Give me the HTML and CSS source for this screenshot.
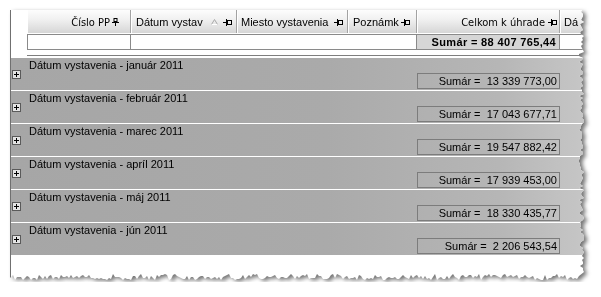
FILE: index.html
```html
<!DOCTYPE html>
<html lang="sk">
<head>
<meta charset="utf-8">
<title>Grid</title>
<link rel="stylesheet" href="styles.css">
</head>
<body>
<div class="paper">
  <div class="sheet" id="sheet">
    <div class="hdr">
      <div class="hc c1 right"><span class="narrow">Číslo PP</span><svg class="pinv" width="7" height="8" viewBox="0 0 7 8"><rect x="2" y="0.5" width="3" height="3" fill="none" stroke="#000"/><path d="M0 4.5H7M3.5 4.5V8" stroke="#000"/></svg></div>
      <div class="hc c2"><span class="t">Dátum vystav</span><svg class="sort" width="7" height="6" viewBox="0 0 7 6"><path d="M3.5 0.5L6.5 5.5H0.5Z" fill="none" stroke="#a8a8a8"/><path d="M0.5 5.5H6.5" stroke="#fff"/></svg><svg class="pin" width="9" height="7" viewBox="0 0 9 7"><path d="M0 3.5H4M3.5 0V7" stroke="#000"/><rect x="4.5" y="1.5" width="4" height="4" fill="none" stroke="#000"/></svg></div>
      <div class="hc c3"><span class="t">Miesto vystavenia</span><svg class="pin" width="9" height="7" viewBox="0 0 9 7"><path d="M0 3.5H4M3.5 0V7" stroke="#000"/><rect x="4.5" y="1.5" width="4" height="4" fill="none" stroke="#000"/></svg></div>
      <div class="hc c4"><span class="t">Poznámk</span><svg class="pin" width="9" height="7" viewBox="0 0 9 7"><path d="M0 3.5H4M3.5 0V7" stroke="#000"/><rect x="4.5" y="1.5" width="4" height="4" fill="none" stroke="#000"/></svg></div>
      <div class="hc c5 right"><span class="narrow">Celkom k úhrade</span><svg class="pin" width="9" height="7" viewBox="0 0 9 7"><path d="M0 3.5H4M3.5 0V7" stroke="#000"/><rect x="4.5" y="1.5" width="4" height="4" fill="none" stroke="#000"/></svg></div>
      <div class="hc c6"><span class="t">Dá</span></div>
    </div>
    <div class="filter">
      <div class="fc f1"></div>
      <div class="fc f2"></div>
      <div class="fc f3">Sumár = 88 407 765,44</div>
      <div class="fc f4"></div>
    </div>
    <div class="rule"></div>
    <div class="groups">
      <div class="group"><span class="plus"></span><div class="glabel">Dátum vystavenia - január 2011</div><div class="gsum">Sumár =  13 339 773,00</div></div>
      <div class="group"><span class="plus"></span><div class="glabel">Dátum vystavenia - február 2011</div><div class="gsum">Sumár =  17 043 677,71</div></div>
      <div class="group"><span class="plus"></span><div class="glabel">Dátum vystavenia - marec 2011</div><div class="gsum">Sumár =  19 547 882,42</div></div>
      <div class="group"><span class="plus"></span><div class="glabel">Dátum vystavenia - apríl 2011</div><div class="gsum">Sumár =  17 939 453,00</div></div>
      <div class="group"><span class="plus"></span><div class="glabel">Dátum vystavenia - máj 2011</div><div class="gsum">Sumár =  18 330 435,77</div></div>
      <div class="group"><span class="plus"></span><div class="glabel">Dátum vystavenia - jún 2011</div><div class="gsum">Sumár =  2 206 543,54</div></div>
    </div>
  </div>
</div>
<script src="script.js"></script>
</body>
</html>
```
FILE: styles.css
```css
html, body {
  margin: 0;
  padding: 0;
  background: #fff;
}
body {
  font-family: "Liberation Sans", Arial, sans-serif;
  font-size: 11px;
  color: #000;
}
.paper {
  padding: 10px 0 0 10px;
  width: 575px;
  filter: drop-shadow(3px 2px 2px rgba(0, 0, 0, 0.55));
}
.sheet {
  width: 575px;
  height: 272px;
  background: #fff;
  border-left: 1px solid #707070;
  box-sizing: border-box;
  overflow: hidden;
}
.hdr {
  margin-left: 16px;
  height: 23px;
  display: flex;
  background: linear-gradient(to bottom, #fdfdfd 0%, #f1f1f1 40%, #d6d6d6 100%);
}
.hc {
  box-sizing: border-box;
  height: 23px;
  display: flex;
  align-items: flex-end;
  padding-bottom: 4px;
  border-right: 1px solid #a3a3a3;
  box-shadow: inset 1px 0 0 #ffffff;
  overflow: hidden;
  white-space: nowrap;
  line-height: 13px;
}
.hc svg { flex: none; margin-bottom: 3px; }
.hc .t { flex: 1; overflow: hidden; }
.right { justify-content: flex-end; }
.narrow {
  font-family: "Liberation Sans Narrow", "Arial Narrow", "DejaVu Sans", sans-serif;
  font-stretch: condensed;
}
.c1 { width: 104px; padding-right: 11px; }
.c1 .narrow { margin-right: 2px; }
.c2 { width: 106px; padding-left: 5px; padding-right: 4px; }
.c2 .sort { margin-right: 5px; margin-bottom: 4px; }
.c3 { width: 111px; padding-left: 4px; padding-right: 4px; }
.c4 { width: 69px; padding-left: 5px; padding-right: 6px; }
.c4 .t { flex: none; margin-right: auto; }
.c5 { width: 143px; padding-right: 2px; }
.c5 .narrow { margin-right: 3px; }
.c6 { flex: 1; padding-left: 4px; border-right: 0; }

.filter {
  margin: 1px 0 0 16px;
  height: 16px;
  display: flex;
  border-top: 1px solid #8a8a8a;
  border-bottom: 1px solid #8a8a8a;
  border-left: 1px solid #8a8a8a;
  box-sizing: border-box;
}
.fc {
  box-sizing: border-box;
  border-right: 1px solid #8a8a8a;
  height: 14px;
}
.f1 { width: 103px; }
.f2 { width: 286px; }
.f3 {
  width: 143px;
  background: #d6d6d6;
  font-weight: bold;
  text-align: right;
  line-height: 14px;
  padding-right: 3px;
  letter-spacing: 0.35px;
  white-space: nowrap;
}
.f4 { flex: 1; border-right: 0; }
.rule {
  margin: 5px 0 0 16px;
  height: 1px;
  background: #7e7e7e;
}
.groups { margin-top: 1px; }
.group {
  border-top: 1px solid #fff;
  height: 32px;
  display: grid;
  grid-template-columns: 18px 388px 143px 1fr;
  grid-template-rows: 15px 16px;
  background: linear-gradient(to right, #a6a6a6 0%, #aaaaaa 55%, #b6b6b6 85%, #c6c6c6 100%);
}
.plus {
  grid-column: 1;
  grid-row: 1 / 3;
  margin: 12px 0 0 1px;
  width: 9px;
  height: 9px;
  box-sizing: border-box;
  border: 1px solid #5a5a5a;
  background: #e4e4e4;
  position: relative;
}
.plus::before, .plus::after {
  content: "";
  position: absolute;
  background: #000;
}
.plus::before { left: 1px; top: 3px; width: 5px; height: 1px; }
.plus::after { left: 3px; top: 1px; width: 1px; height: 5px; }
.glabel {
  grid-column: 2 / 5;
  grid-row: 1;
  line-height: 13px;
  padding-top: 1px;
  white-space: nowrap;
}
.gsum {
  grid-column: 3;
  grid-row: 2;
  box-sizing: border-box;
  height: 16px;
  border: 1px solid #7c7c7c;
  text-align: right;
  line-height: 14px;
  padding-right: 2px;
  white-space: pre;
}
```
FILE: script.js
```js
(function () {
  var sheet = document.getElementById('sheet');
  var W = 575, H = 272;
  var seed = 7;
  function rnd() {
    seed = (seed * 9301 + 49297) % 233280;
    return seed / 233280;
  }
  var pts = ['0px 0px'];
  var y, x;
  for (y = 0; y < H - 8; y += 2) {
    x = W - 1 - Math.round(rnd() * 5);
    pts.push(x + 'px ' + y + 'px');
  }
  for (x = W - 6; x > 0; x -= 2) {
    y = H - 2 - Math.round(rnd() * 6);
    pts.push(x + 'px ' + y + 'px');
  }
  pts.push('0px ' + (H - 4) + 'px');
  sheet.style.clipPath = 'polygon(' + pts.join(',') + ')';
})();
```
